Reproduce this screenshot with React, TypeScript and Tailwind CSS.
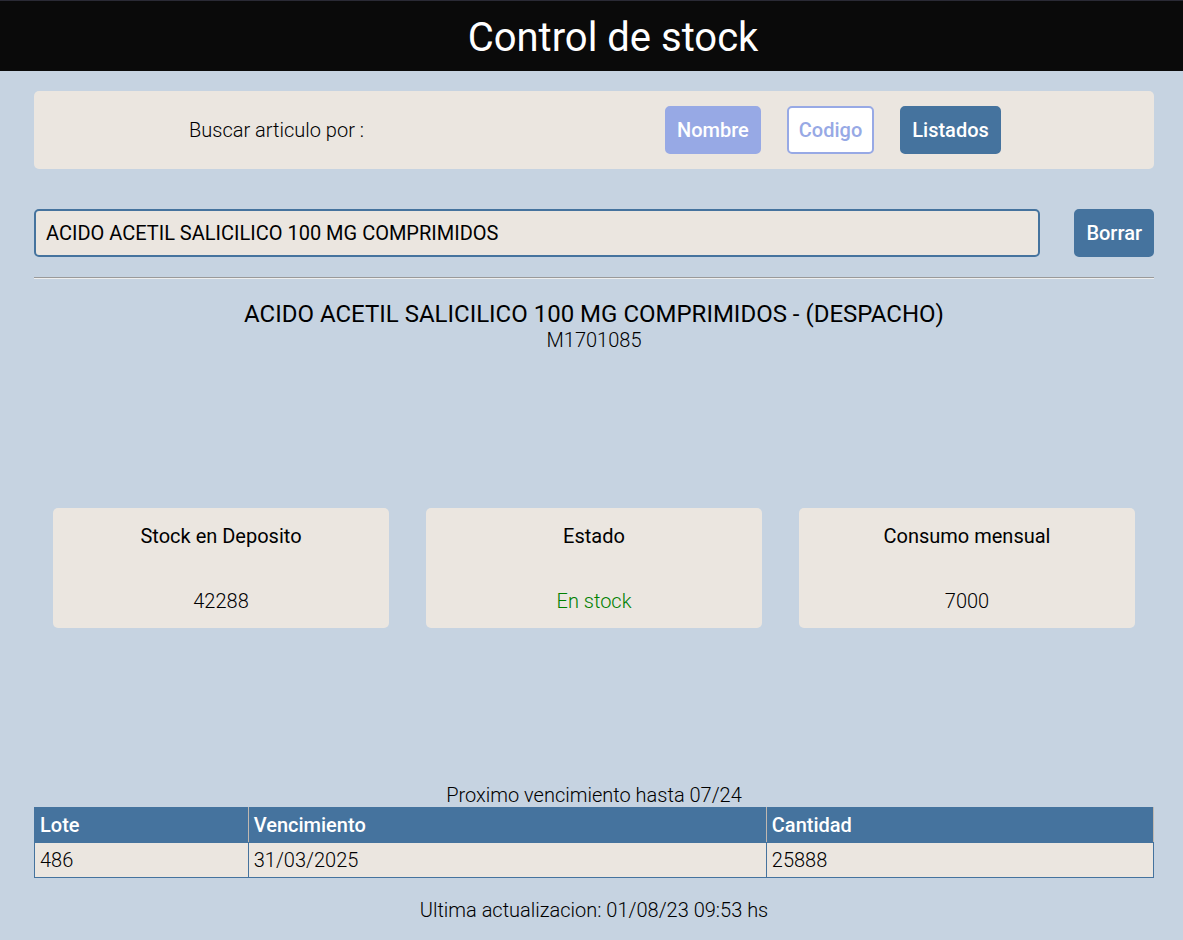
import { useState } from "react";

const cards = [
  { title: "Stock en Deposito", value: "42288", tone: "text-black" },
  { title: "Estado", value: "En stock", tone: "text-[#008000]" },
  { title: "Consumo mensual", value: "7000", tone: "text-black" },
];

const button = "h-12 rounded-[5px] border-2 px-[10px] font-medium";

export default function App() {
  const [query, setQuery] = useState("ACIDO ACETIL SALICILICO 100 MG COMPRIMIDOS");
  return (
    <div className="flex min-h-screen flex-col bg-[#c6d3e1] font-[Roboto,sans-serif] text-xl font-light text-black">
      <header className="border-t border-[#2a2a35] bg-[#0a0a0a] pb-2 pl-[43px] pt-3 text-center text-white">
        <h1 className="text-[40px] leading-[50px] font-normal">Control de stock</h1>
      </header>
      <main className="flex grow flex-col pl-[34px] pr-[29px] pt-5">
        <section className="grid h-[78px] grid-cols-[485fr_635fr] items-center rounded-[5px] bg-[#ebe6e0]">
          <p className="text-center">Buscar articulo por :</p>
          <div className="flex gap-[26px] pl-[146px]">
            <button type="button" className={`${button} border-[#97a9e5] bg-[#97a9e5] text-white`}>Nombre</button>
            <button type="button" className={`${button} border-[#97a9e5] bg-white text-[#97a9e5]`}>Codigo</button>
            <button type="button" className={`${button} border-[#45739e] bg-[#45739e] text-white`}>Listados</button>
          </div>
        </section>
        <form className="mt-10 flex gap-[34px]" onSubmit={(e) => e.preventDefault()}>
          <input
            type="text"
            aria-label="Nombre del articulo"
            value={query}
            onChange={(e) => setQuery(e.target.value)}
            className="h-12 min-w-0 grow rounded-[5px] border-2 border-[#45739e] bg-[#ebe6e0] px-[10px] font-normal outline-none"
          />
          <button type="button" onClick={() => setQuery("")} className={`${button} border-[#45739e] bg-[#45739e] text-white`}>Borrar</button>
        </form>
        <hr className="mt-5 h-[2px] border-b border-t border-b-[#eeeeee] border-t-[#9a9a9a]" />
        <div className="mt-[21px] text-center">
          <h2 className="text-2xl leading-7 font-normal">ACIDO ACETIL SALICILICO 100 MG COMPRIMIDOS - (DESPACHO)</h2>
          <p className="leading-6">M1701085</p>
        </div>
        <section className="my-auto grid grid-cols-3 gap-[37px] px-[19px]">
          {cards.map((card) => (
            <article key={card.title} className="flex h-[120px] flex-col items-center justify-between rounded-[5px] bg-[#ebe6e0] pb-[15px] pt-4 leading-6">
              <h3 className="font-normal">{card.title}</h3>
              <p className={card.tone}>{card.value}</p>
            </article>
          ))}
        </section>
        <table className="w-full table-fixed border-collapse text-left">
          <caption className="leading-6">Proximo vencimiento hasta 07/24</caption>
          <colgroup>
            <col className="w-[19.1%]" />
            <col className="w-[46.3%]" />
            <col className="w-[34.6%]" />
          </colgroup>
          <thead className="bg-[#45739e] text-white">
            <tr className="h-[35px]">
              <th className="border border-[#45739e] border-r-[#c0b8b0] px-[5px] font-medium">Lote</th>
              <th className="border border-[#45739e] border-r-[#c0b8b0] px-[5px] font-medium">Vencimiento</th>
              <th className="border border-[#45739e] border-r-[#c0b8b0] px-[5px] font-medium">Cantidad</th>
            </tr>
          </thead>
          <tbody className="bg-[#ebe6e0]">
            <tr className="h-[35px]">
              <td className="border border-[#45739e] px-[5px]">486</td>
              <td className="border border-[#45739e] px-[5px]">31/03/2025</td>
              <td className="border border-[#45739e] px-[5px]">25888</td>
            </tr>
          </tbody>
        </table>
        <footer className="pb-[18px] pt-5 text-center leading-6">Ultima actualizacion: 01/08/23 09:53 hs</footer>
      </main>
    </div>
  );
}
